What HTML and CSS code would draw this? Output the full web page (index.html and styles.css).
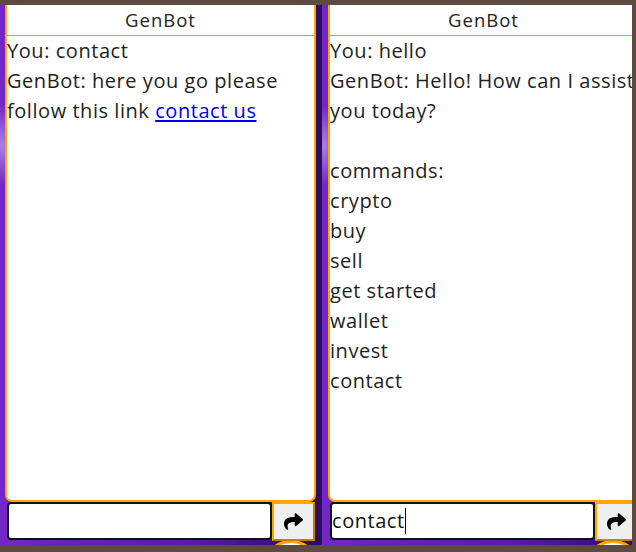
FILE: index.html
```html
<!DOCTYPE html>
<html>
<head>
<meta charset="utf-8">
<link rel="stylesheet" href="styles.css">
</head>
<body>
<div class="stage">
  <section class="panel panel-a">
    <div class="chatbox">
      <div class="chat-header">GenBot</div>
      <div class="messages">
        <div class="msg">You: contact</div>
        <div class="msg">GenBot: here you go please follow this link <a href="#">contact us</a></div>
      </div>
    </div>
    <div class="input-row">
      <div class="chat-input"></div>
      <button class="send" type="button">
        <svg viewBox="0 0 512 512" width="19" height="19"><path d="M503.691 189.836L327.687 37.851C312.281 24.546 288 35.347 288 56.015v80.053C127.371 137.907 0 170.1 0 322.326c0 61.441 39.581 122.309 83.333 154.132 13.653 9.931 33.111-2.533 28.077-18.631C66.066 312.814 132.917 274.316 288 272.085V360c0 20.7 24.3 31.453 39.687 18.164l176.004-152c11.071-9.562 11.086-26.753 0-36.328z"/></svg>
      </button>
    </div>
    <div class="toggle"></div>
  </section>
  <section class="panel panel-b">
    <div class="chatbox">
      <div class="chat-header">GenBot</div>
      <div class="messages">
        <div class="msg">You: hello</div>
        <div class="msg bot">GenBot: Hello! How can I assist you today?

commands:
crypto
buy
sell
get started
wallet
invest
contact</div>
      </div>
    </div>
    <div class="input-row">
      <div class="chat-input">contact<span class="caret"></span></div>
      <button class="send" type="button">
        <svg viewBox="0 0 512 512" width="19" height="19"><path d="M503.691 189.836L327.687 37.851C312.281 24.546 288 35.347 288 56.015v80.053C127.371 137.907 0 170.1 0 322.326c0 61.441 39.581 122.309 83.333 154.132 13.653 9.931 33.111-2.533 28.077-18.631C66.066 312.814 132.917 274.316 288 272.085V360c0 20.7 24.3 31.453 39.687 18.164l176.004-152c11.071-9.562 11.086-26.753 0-36.328z"/></svg>
      </button>
    </div>
    <div class="toggle"></div>
  </section>
</div>
</body>
</html>
```
FILE: styles.css
```css
html, body {
  margin: 0;
  padding: 0;
}
body {
  background: #5d4a41;
  height: 552px;
  overflow: hidden;
  font-family: "Open Sans", "Noto Sans", sans-serif;
  letter-spacing: 0.55px;
  color: #1e1e1e;
}
.stage {
  margin-top: 5px;
  width: 632px;
  height: 540px;
  overflow: hidden;
  display: flex;
}
.panel {
  position: relative;
  flex: 0 0 322px;
  height: 540px;
  box-sizing: border-box;
  padding-left: 5px;
  display: flex;
  flex-direction: column;
  background:
    radial-gradient(ellipse 14px 40px at 2px 140px, rgba(190, 160, 240, 0.75), rgba(190, 160, 240, 0) 100%),
    linear-gradient(to right, #7327c6 0%, #5a1aa6 60%, #2a0c63 100%);
}
.panel-b {
  padding-left: 6px;
}
.chatbox {
  position: relative;
  z-index: 1;
  width: 311px;
  height: 497px;
  box-sizing: border-box;
  background: #fff;
  border: 2px solid #ffa500;
  border-top: 0;
  border-radius: 0 0 7px 7px;
  display: flex;
  flex-direction: column;
  overflow: hidden;
}
.chat-header {
  height: 30px;
  border-bottom: 1px solid #f5a000;
  text-align: center;
  font-size: 18.5px;
  letter-spacing: 1px;
  line-height: 30px;
  color: #222;
}
.messages {
  flex: 1;
  font-size: 20px;
  line-height: 30px;
}
.msg a {
  color: #0000ee;
  text-underline-offset: 2px;
}
.bot {
  white-space: pre-line;
}
.input-row {
  position: relative;
  z-index: 1;
  display: flex;
  margin-left: 2px;
  height: 39px;
}
.chat-input {
  width: 265px;
  height: 38px;
  box-sizing: border-box;
  border: 2px solid #111;
  border-radius: 4px;
  background: #fff;
  font-size: 20px;
  line-height: 34px;
  padding-left: 0;
  color: #111;
}
.caret {
  display: inline-block;
  width: 1px;
  height: 26px;
  background: #000;
  vertical-align: -6px;
}
.send {
  width: 43px;
  height: 39px;
  box-sizing: border-box;
  margin: 0;
  padding: 0;
  background: #efefef;
  border: 2px solid #ffa500;
  border-right-color: #c08000;
  border-bottom-color: #c08000;
  display: flex;
  align-items: center;
  justify-content: center;
}
.send svg {
  display: block;
}
.toggle {
  position: absolute;
  left: 262px;
  top: 535px;
  width: 58px;
  height: 58px;
  box-sizing: border-box;
  border: 3px solid #ffa500;
  border-radius: 50%;
  background: #fff;
}
```
